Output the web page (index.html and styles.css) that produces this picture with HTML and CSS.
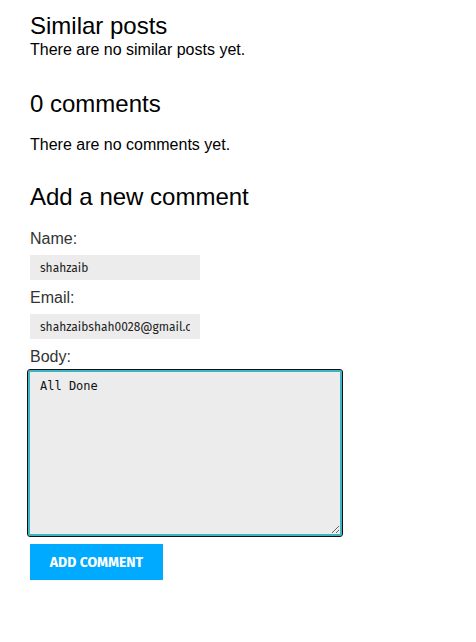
FILE: index.html
```html
<!DOCTYPE html>
<html>
<head>
<meta charset="utf-8">
<link rel="stylesheet" href="styles.css">
</head>
<body>
<div class="page">
  <section class="block similar">
    <h2 class="title">Similar posts</h2>
    <p class="text tight">There are no similar posts yet.</p>
  </section>
  <section class="block comments">
    <h2 class="title">0 comments</h2>
    <p class="text">There are no comments yet.</p>
  </section>
  <section class="block form-block">
    <h2 class="title">Add a new comment</h2>
    <form class="form">
      <label class="label">Name:</label>
      <input class="field" type="text" value="shahzaib">
      <label class="label">Email:</label>
      <input class="field" type="text" value="shahzaibshah0028@gmail.com">
      <label class="label label-body">Body:</label>
      <textarea class="area">All Done</textarea>
      <button class="btn" type="button">ADD COMMENT</button>
    </form>
  </section>
</div>
</body>
</html>
```
FILE: styles.css
```css
* { box-sizing: border-box; }
html, body { margin: 0; padding: 0; background: #fff; }
body { font-family: "Liberation Sans", Arial, sans-serif; color: #000; }
.page { padding: 12px 0 0 30px; }
.title { font-size: 24px; font-weight: normal; margin: 0; line-height: 27px; }
.text { font-size: 16px; margin: 0; line-height: 18px; }
.similar .text { margin-top: 2px; }
.comments { margin-top: 31px; }
.comments .text { margin-top: 19px; }
.form-block { margin-top: 29px; }
.form { display: flex; flex-direction: column; align-items: flex-start; margin-top: 20px; }
.label { font-size: 16px; color: #333; line-height: 18px; margin-bottom: 7px; }
.label-body { margin-bottom: 4px; }
.field {
  width: 170px; height: 25px; border: none; background: #ececec;
  font-family: "Fira Sans", "Open Sans", "Noto Sans", sans-serif; font-size: 12px;
  padding: 0 10px; color: #222; margin-bottom: 9px; outline: none;
}
.area {
  width: 314px; height: 166px; margin-left: -2px; margin-bottom: 8px;
  background: #ececec; border: 2px solid #3fb3c3; border-radius: 2px;
  outline: 1px solid #111; outline-offset: 0;
  font-family: "DejaVu Sans Mono", monospace; font-size: 12px; color: #111;
  padding: 7px 10px; resize: both;
}
.btn {
  width: 133px; height: 36px; background: #00aaff; color: #fff; border: none;
  font-family: "Fira Sans", "Open Sans", sans-serif; font-weight: bold; font-size: 14px;
  padding: 0;
}
```
